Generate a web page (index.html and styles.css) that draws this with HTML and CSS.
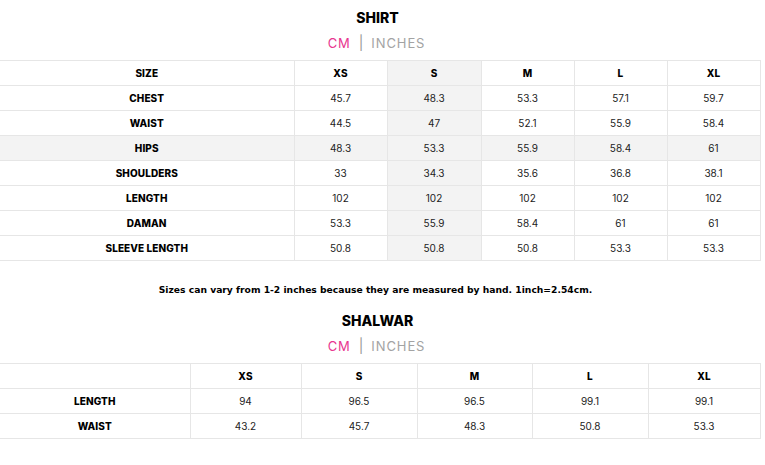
FILE: index.html
```html
<!DOCTYPE html>
<html>
<head>
<meta charset="utf-8">
<link rel="stylesheet" href="styles.css">
</head>
<body>
<section class="chart">
  <h2 class="chart-title">SHIRT</h2>
  <div class="units"><span class="unit active">CM</span><span class="sep">|</span><span class="unit">INCHES</span></div>
  <table class="size-table shirt">
    <colgroup><col class="c-label"><col class="c-n"><col class="c-n2"><col class="c-n"><col class="c-n"><col class="c-n"></colgroup>
    <thead>
      <tr><th>SIZE</th><th>XS</th><th class="hl">S</th><th>M</th><th>L</th><th>XL</th></tr>
    </thead>
    <tbody>
      <tr><th>CHEST</th><td>45.7</td><td class="hl">48.3</td><td>53.3</td><td>57.1</td><td>59.7</td></tr>
      <tr><th>WAIST</th><td>44.5</td><td class="hl">47</td><td>52.1</td><td>55.9</td><td>58.4</td></tr>
      <tr class="hl-row"><th>HIPS</th><td>48.3</td><td class="hl">53.3</td><td>55.9</td><td>58.4</td><td>61</td></tr>
      <tr><th>SHOULDERS</th><td>33</td><td class="hl">34.3</td><td>35.6</td><td>36.8</td><td>38.1</td></tr>
      <tr><th>LENGTH</th><td>102</td><td class="hl">102</td><td>102</td><td>102</td><td>102</td></tr>
      <tr><th>DAMAN</th><td>53.3</td><td class="hl">55.9</td><td>58.4</td><td>61</td><td>61</td></tr>
      <tr><th>SLEEVE LENGTH</th><td>50.8</td><td class="hl">50.8</td><td>50.8</td><td>53.3</td><td>53.3</td></tr>
    </tbody>
  </table>
  <p class="note">Sizes can vary from 1-2 inches because they are measured by hand. 1inch=2.54cm.</p>
</section>
<section class="chart">
  <h2 class="chart-title">SHALWAR</h2>
  <div class="units"><span class="unit active">CM</span><span class="sep">|</span><span class="unit">INCHES</span></div>
  <table class="size-table shalwar">
    <colgroup><col class="s1"><col class="s2"><col class="s3"><col class="s4"><col class="s5"><col class="s6"></colgroup>
    <thead>
      <tr><th></th><th>XS</th><th>S</th><th>M</th><th>L</th><th>XL</th></tr>
    </thead>
    <tbody>
      <tr><th>LENGTH</th><td>94</td><td>96.5</td><td>96.5</td><td>99.1</td><td>99.1</td></tr>
      <tr><th>WAIST</th><td>43.2</td><td>45.7</td><td>48.3</td><td>50.8</td><td>53.3</td></tr>
    </tbody>
  </table>
</section>
</body>
</html>
```
FILE: styles.css
```css
html, body {
  margin: 0;
  padding: 0;
  background: #fff;
}
body {
  font-family: Inter, "Noto Sans", sans-serif;
  color: #111;
  width: 765px;
}
.chart {
  display: flex;
  flex-direction: column;
  align-items: flex-start;
}
.chart-title {
  align-self: stretch;
  margin: 8px 0 0 0;
  padding-right: 10px;
  font-size: 14px;
  line-height: 20px;
  font-weight: 800;
  text-align: center;
  color: #000;
}
.units {
  align-self: stretch;
  margin-top: 5px;
  padding-right: 12px;
  display: flex;
  justify-content: center;
  align-items: center;
  gap: 8px;
  font-size: 13px;
  line-height: 20px;
  letter-spacing: 0.9px;
  color: #a3a3a3;
}
.unit.active { color: #e8368f; }
.sep { color: #999; font-size: 14px; letter-spacing: 0; }
.size-table {
  margin-top: 7px;
  width: 760px;
  border-collapse: collapse;
  table-layout: fixed;
}
.size-table th,
.size-table td {
  height: 24px;
  padding: 0;
  border: 1px solid #e6e6e6;
  text-align: center;
  vertical-align: middle;
  font-size: 10px;
}
.size-table tr > :first-child { border-left: 0; }
.size-table th {
  font-weight: 800;
  color: #000;
  letter-spacing: 0.1px;
}
.size-table td {
  font-weight: 400;
  color: #222;
}
.hl, .hl-row > * { background: #f3f3f3; }
.c-label { width: 294px; }
.c-n { width: 93px; }
.c-n2 { width: 94px; }
.s1 { width: 190px; }
.s2 { width: 111px; }
.s3 { width: 116px; }
.s4 { width: 115px; }
.s5 { width: 116px; }
.s6 { width: 112px; }
.note {
  align-self: stretch;
  margin: 21px 0 5px 0;
  padding-right: 14px;
  font-family: "DejaVu Sans", Verdana, sans-serif;
  font-weight: 700;
  font-size: 9.2px;
  line-height: 16px;
  text-align: center;
  color: #000;
}
```
